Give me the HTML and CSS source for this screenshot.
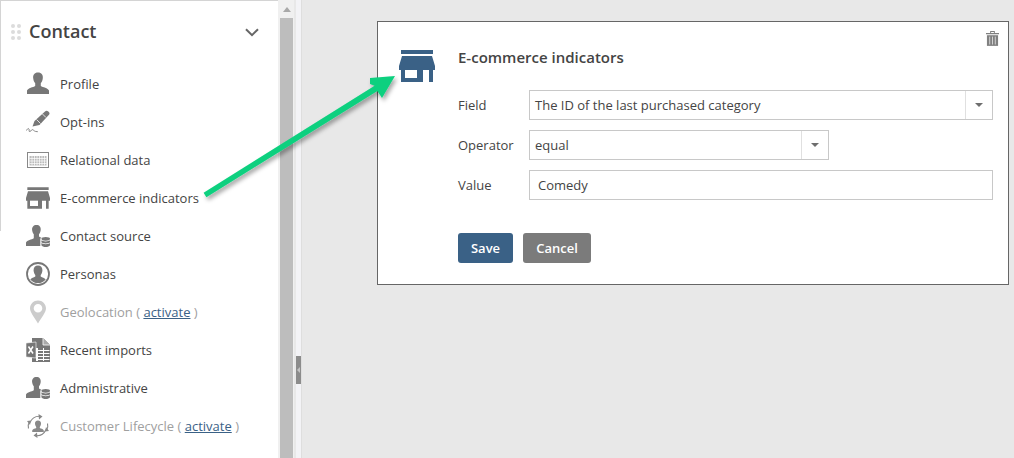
FILE: index.html
```html
<!DOCTYPE html>
<html lang="en">
<head>
<meta charset="utf-8">
<title>E-commerce indicators</title>
<link rel="stylesheet" href="styles.css">
</head>
<body>
<div class="app">
  <aside class="sidebar">
    <div class="head">
      <span class="grip"><i></i><i></i><i></i><i></i><i></i><i></i></span>
      <h2 class="head-title">Contact</h2>
      <svg class="chevron" width="14" height="9" viewBox="0 0 14 9"><path d="M1 1.200l6 6 6-6" fill="none" stroke="#666" stroke-width="2"/></svg>
    </div>
    <ul class="menu">
      <li class="item">
        <svg class="ico" viewBox="0 0 24 24"><path d="M12 .5c3.600 0 5.200 2.500 4.800 5.800-.2 2.200-1 3.800-2 5v2.700c2 1.300 7.200 2 8.200 4.500V22H1v-3.500c1-2.500 6.200-3.200 8.200-4.500v-2.700c-1-1.200-1.800-2.800-2-5C6.800 3 8.400.5 12 .5z" fill="#777"/></svg>
        <span>Profile</span>
      </li>
      <li class="item">
        <svg class="ico" viewBox="0 0 24 24"><path d="M6.500 16.500l2-5.500L19 1.500c.9-.8 2-.9 3.300-.1 1.400 1 1.500 2.300.7 3.400L13.500 15z" fill="#777"/><path d="M10.500 9.500l4 4M16.500 4l3.500 3.500" stroke="#fff" stroke-width=".8"/><path d="M.5 20.500c1-2 2-2.500 2.500-1.500s-.5 3 1 2.500 1.500-2.500 2.800-1.800 1.500 2 5 2" fill="none" stroke="#888" stroke-width="1"/></svg>
        <span>Opt-ins</span>
      </li>
      <li class="item">
        <svg class="ico" viewBox="0 0 24 24"><rect x="1.500" y="4.500" width="21" height="15" fill="#fff" stroke="#888"/><path d="M3.500 8h17v9.500h-17z" fill="#bbb"/><path d="M3.500 10.500h17M3.500 13h17M3.500 15.500h17M6 8v9.500M8.500 8v9.500M11 8v9.500M13.500 8v9.500M16 8v9.500M18.500 8v9.500" stroke="#fff" stroke-width=".7"/></svg>
        <span>Relational data</span>
      </li>
      <li class="item">
        <svg class="ico" viewBox="0 0 24 24"><use href="#store" fill="#777"/></svg>
        <span>E-commerce indicators</span>
      </li>
      <li class="item">
        <svg class="ico" viewBox="0 0 24 24"><use href="#admin"/></svg>
        <span>Contact source</span>
      </li>
      <li class="item">
        <svg class="ico" viewBox="0 0 24 24"><circle cx="12" cy="12" r="11" fill="none" stroke="#777" stroke-width="1.800"/><path d="M12 3.500c3 0 4.600 2.200 4.400 5.200-.2 1.900-.9 3.200-1.700 4.200v1.600c1.600 1 3.800 1.500 5 3A10 10 0 0 1 4.300 17.500c1.200-1.500 3.400-2 5-3v-1.600c-.8-1-1.500-2.300-1.700-4.200C7.400 5.700 9 3.500 12 3.500z" fill="#777"/></svg>
        <span>Personas</span>
      </li>
      <li class="item off">
        <svg class="ico" viewBox="0 0 24 24"><path fill-rule="evenodd" d="M12 .5c4.400 0 8 3.400 8 7.800 0 4.500-5 9.700-8 15.200-3-5.500-8-10.700-8-15.200C4 3.900 7.600.5 12 .5zm0 3.500a4.300 4.300 0 1 0 0 8.600 4.300 4.300 0 0 0 0-8.600z" fill="#ccc"/></svg>
        <span>Geolocation ( <a class="link" href="#">activate</a> )</span>
      </li>
      <li class="item">
        <svg class="ico" viewBox="0 0 24 24"><path d="M6 0h11l7 7v17H6z" fill="#777"/><path d="M17 0v7h7" fill="#aaa" stroke="#fff" stroke-width=".8"/><path d="M10 10h2v13h-2z" fill="#fff"/><path d="M0 5l10-1v16L0 19z" fill="#777" stroke="#fff" stroke-width=".6"/><path d="M2.500 8.500l4.500 7M7 8.500l-4.500 7" stroke="#fff" stroke-width="1.500"/><path d="M12 12.500h11.500M12 15.500h11.500M12 18.500h11.500M12 21.500h11.500M17.500 10v13" stroke="#fff" stroke-width="1"/></svg>
        <span>Recent imports</span>
      </li>
      <li class="item">
        <svg class="ico" viewBox="0 0 24 24"><use href="#admin"/></svg>
        <span>Administrative</span>
      </li>
      <li class="item off">
        <svg class="ico" viewBox="0 0 24 24"><path d="M12 6.500c2.100 0 3.200 1.400 3 3.500-.1 1.200-.6 2.100-1.200 2.900v1.200c1 .6 3.500.9 4 2.300V18H6.200v-1.600c.5-1.400 3-1.700 4-2.300v-1.200c-.6-.8-1.100-1.700-1.200-2.900-.2-2.100.9-3.500 3-3.500z" fill="#888"/><path d="M4 8.500C6 4 9.500 2 14 2.300M20 15.500c-2 4.500-5.500 6.500-10 6.200M2.500 14.500C1.800 12 2 10 3.500 7.500M21.500 9.500c.7 2.500.5 4.500-1 7" fill="none" stroke="#888" stroke-width="1.100"/><path d="M12.500 0l4 2.500-3.500 3zM11.500 24l-4-2.500 3.500-3zM1 7l4-.5L4 11zM23 17l-4 .5 1-4.500z" fill="#888"/></svg>
        <span>Customer Lifecycle ( <a class="link" href="#">activate</a> )</span>
      </li>
    </ul>
  </aside>

  <div class="scrollbar">
    <span class="scroll-up"></span>
    <span class="scroll-thumb"></span>
  </div>

  <div class="splitter">
    <span class="handle"><i></i></span>
  </div>

  <main class="main">
    <section class="card">
      <svg class="trash" width="13" height="16" viewBox="0 0 14 17">
        <path d="M0 3h14v1.500H0zM4.500 3V1h5v2h-1V2h-3v1z" fill="#808080"/>
        <path d="M1 5.500h12V17H1z" fill="#808080"/>
        <path d="M4 7v8.500M7 7v8.500M10 7v8.500" stroke="#d8d8d8" stroke-width="1"/>
      </svg>
      <svg class="card-ico" width="36" height="32" viewBox="0 0 36 32"><use href="#store" fill="#3a6186"/></svg>
      <div class="card-body">
        <h3 class="card-title">E-commerce indicators</h3>
        <div class="form">
          <label class="lbl">Field</label>
          <div class="control">
            <span class="val">The ID of the last purchased category</span>
            <span class="caret"><i></i></span>
          </div>
          <label class="lbl">Operator</label>
          <div class="control short">
            <span class="val">equal</span>
            <span class="caret"><i></i></span>
          </div>
          <label class="lbl">Value</label>
          <div class="control">
            <span class="val text">Comedy</span>
          </div>
        </div>
        <div class="actions">
          <button class="btn save" type="button">Save</button>
          <button class="btn cancel" type="button">Cancel</button>
        </div>
      </div>
    </section>
  </main>
</div>

<svg class="arrow" width="1014" height="458" viewBox="0 0 1014 458">
  <defs>
    <filter id="sh" x="-10%" y="-10%" width="130%" height="130%"><feDropShadow dx="2" dy="3" stdDeviation="2" flood-color="#000" flood-opacity=".35"/></filter>
    <symbol id="store" viewBox="0 0 36 32"><path d="M2 0h32v4H2zM3 6h30l3 10v4H34v12h-4V20h-6v12H2V20H0v-4z"/><path d="M6 20h12v8H6z" fill="#fff"/></symbol>
    <symbol id="admin" viewBox="0 0 24 24"><path d="M10.500 1c3 0 4.600 2.100 4.200 5-.2 1.900-.9 3.300-1.700 4.300v2.200c.8.500 1.700.9 2.600 1.300-.8.300-1.300.8-1.300 1.500V22H0v-3.500c.9-2.300 6-3 7.800-4.300v-3.900C7 9.300 6.300 7.900 6.100 6 5.800 3.100 7.500 1 10.500 1z" fill="#777"/><ellipse cx="19.700" cy="14.800" rx="4.300" ry="1.900" fill="#777"/><path d="M15.400 16.300c1 1.500 7.600 1.500 8.600 0v2c-1 1.500-7.600 1.500-8.600 0zM15.400 19.100c1 1.500 7.600 1.500 8.600 0v2.100c-1 2.400-7.600 2.400-8.600 0z" fill="#777"/></symbol>
  </defs>
  <path filter="url(#sh)" d="M203.600 192.700L374.600 85.700 370 84 370 78 395 76 382 98 377.400 91 206.400 197.300z" fill="#0bd07f"/>
</svg>
</body>
</html>
```
FILE: styles.css
```css
* { box-sizing: border-box; }
html, body { margin: 0; padding: 0; height: 100%; overflow: hidden; }
body {
  font-family: "Open Sans", "Liberation Sans", sans-serif;
  font-size: 13px;
  color: #444;
  background: #e8e8e8;
}
.app { display: flex; height: 458px; }

.sidebar {
  width: 278px;
  flex: none;
  background: #fff;
  border-top: 1px solid #d4d4d4;
  padding-left: 1px;
  position: relative;
}
.sidebar::before {
  content: "";
  position: absolute;
  left: 0; top: 0;
  width: 1px; height: 230px;
  background: #d4d4d4;
}
.head { display: flex; align-items: center; height: 60px; padding: 0 0 0 9px; }
.grip { display: grid; grid-template-columns: 4px 4px; gap: 2px; width: 11px; margin-right: 8px; margin-top: 2px; padding-left: 1px; }
.grip i { width: 4px; height: 4px; border-radius: 50%; background: #dcdcdc; }
.head-title { margin: 0; font-size: 18px; font-weight: 600; color: #444; flex: 1; line-height: 24px; }
.chevron { margin-right: 19px; margin-top: 2px; }

.menu { list-style: none; margin: 4px 0 0; padding: 0 0 0 25px; }
.item { display: flex; align-items: center; height: 38px; color: #444; }
.ico { width: 24px; height: 24px; margin-right: 10px; flex: none; }
.off { color: #a0a0a0; }
.link { color: #3a6186; }

.scrollbar {
  width: 16px;
  flex: none;
  background: #f0f0f0;
  padding: 7px 1px 0 2px;
  display: flex;
  flex-direction: column;
}
.scroll-up {
  align-self: center;
  width: 0; height: 0;
  border-left: 4px solid transparent;
  border-right: 4px solid transparent;
  border-bottom: 5px solid #a8a8a8;
  margin-bottom: 6px;
}
.scroll-thumb { flex: 1; background: #bdbdbd; }

.splitter {
  width: 8px;
  flex: none;
  background: #f3f3f6;
  border-left: 2px solid #e8e8e8;
  border-right: 1px solid #dedede;
  position: relative;
}
.handle {
  position: absolute;
  left: 0; top: 356px;
  width: 5px; height: 28px;
  background: #8c8c8c;
  display: flex;
  align-items: center;
  justify-content: center;
}
.handle i {
  width: 0; height: 0;
  border-top: 3px solid transparent;
  border-bottom: 3px solid transparent;
  border-right: 3px solid #c4c4c4;
}

.main { flex: 1; padding: 21px 5px 0 75px; background: #e8e8e8; }
.card {
  height: 264px;
  background: #fff;
  border: 1px solid #666;
  display: flex;
  padding: 25px 15px 0 21px;
  position: relative;
}
.trash { position: absolute; right: 9px; top: 8px; }
.card-ico { flex: none; margin-right: 23px; margin-top: 3px; }
.card-body { flex: 1; }
.card-title { margin: 0 0 23px; font-size: 15px; font-weight: 600; line-height: 20px; color: #444; }
.form { display: grid; grid-template-columns: 71px 1fr; row-gap: 10px; }
.lbl { display: flex; align-items: center; height: 30px; color: #444; }
.control {
  display: flex;
  height: 30px;
  border: 1px solid #c8c8c8;
  align-items: center;
  background: #fff;
}
.short { width: 300px; }
.val { flex: 1; padding-left: 5px; color: #444; }
.val.text { padding-left: 8px; }
.caret {
  width: 27px;
  height: 100%;
  border-left: 1px solid #e0e0e0;
  display: flex;
  align-items: center;
  justify-content: center;
}
.caret i {
  width: 0; height: 0;
  border-left: 4px solid transparent;
  border-right: 4px solid transparent;
  border-top: 4px solid #6e6e6e;
}
.actions { display: flex; gap: 10px; margin-top: 33px; }
.btn {
  height: 30px;
  border: 0;
  border-radius: 3px;
  color: #fff;
  font: 600 13px "Open Sans", "Liberation Sans", sans-serif;
  padding: 0;
}
.save { width: 55px; background: #3a6186; }
.cancel { width: 68px; background: #7b7b7b; }

.arrow { position: absolute; left: 0; top: 0; pointer-events: none; }
```
